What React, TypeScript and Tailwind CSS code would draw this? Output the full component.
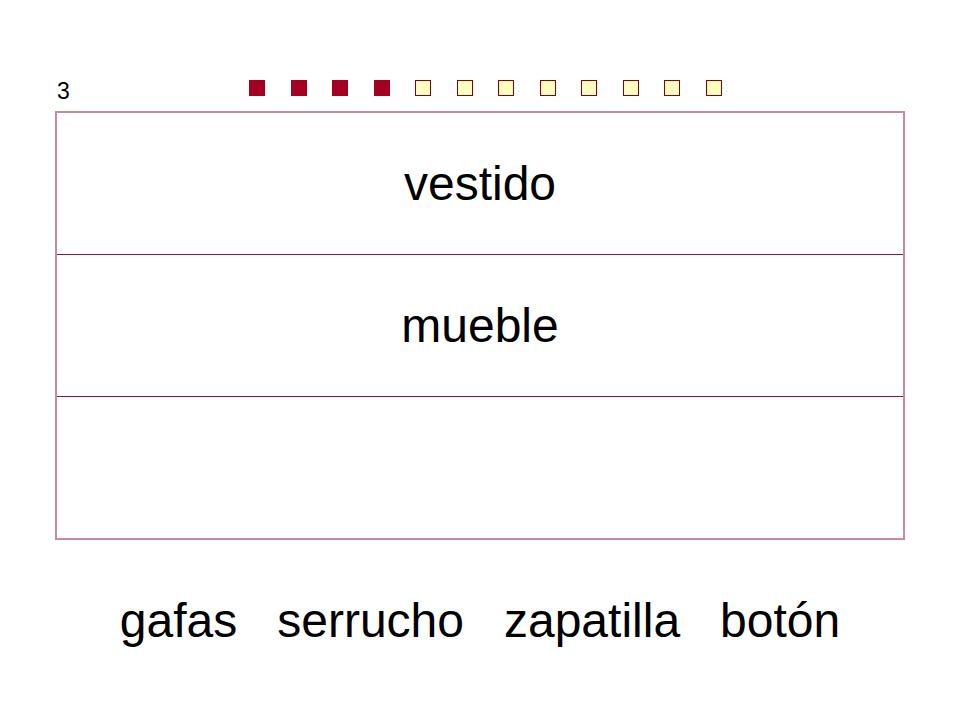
export default function App() {
  const filled = 4;
  const total = 12;

  return (
    <div className="w-[960px] h-[720px] bg-white overflow-hidden font-['Liberation_Sans',Arial,sans-serif] text-black">
      {/* header: page number + progress squares */}
      <div className="flex items-start h-[31px] mt-[80px] pl-[57px]">
        <span className="w-[192px] text-[23px] leading-[23px]">3</span>
        <div className="flex gap-[25.5px]">
          {Array.from({ length: total }).map((_, i) =>
            i < filled ? (
              <div key={i} className="w-4 h-4 bg-[#a50021]" />
            ) : (
              <div key={i} className="w-4 h-4 bg-[#ffffc0] border border-[#8b0000]" />
            )
          )}
        </div>
      </div>

      {/* word table */}
      <div className="ml-[55px] w-[850px] border-2 border-[#c98a9a] flex flex-col">
        <div className="h-[141px] flex items-center justify-center text-[48px] leading-[48px]">
          vestido
        </div>
        <div className="h-px bg-[#8b1a3a]" />
        <div className="h-[141px] flex items-center justify-center text-[48px] leading-[48px]">
          mueble
        </div>
        <div className="h-px bg-[#8b1a3a]" />
        <div className="h-[141px]" />
      </div>

      {/* word bank */}
      <p className="mt-[57px] text-center text-[48px] leading-[48px] whitespace-pre">
        {"gafas   serrucho   zapatilla   botón"}
      </p>
    </div>
  );
}
